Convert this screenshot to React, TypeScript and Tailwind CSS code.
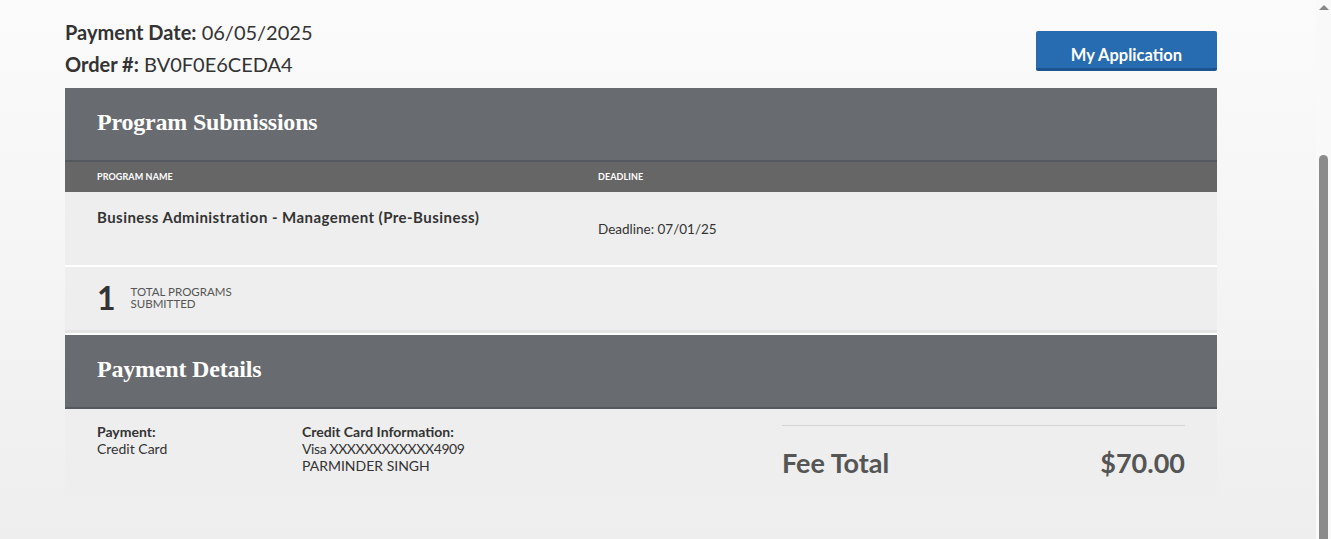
const sans = { fontFamily: 'Lato, "Open Sans", sans-serif' };

function SectionHeader({ title }: { title: string }) {
  return (
    <div className="h-[74px] bg-[#686b6f] border-b-2 border-[#55585c] flex items-center px-8">
      <h2 className="text-white text-[24px] font-bold tracking-[-0.2px] font-['Liberation_Serif',serif] -mt-1">
        {title}
      </h2>
    </div>
  );
}

export default function App() {
  return (
    <div
      className="h-[539px] w-[1331px] overflow-hidden flex bg-gradient-to-b from-[#fbfbfb] to-[#eeeeee] text-[#333]"
      style={sans}
    >
      <main className="flex-1 pl-[65px] pr-[99px] pt-[16px]">
        {/* Order summary */}
        <div className="flex justify-between items-start h-[72px]">
          <div className="text-[20px] leading-[32px] text-[#333]">
            <div>
              <span className="font-bold">Payment Date:</span> 06/05/2025
            </div>
            <div>
              <span className="font-bold">Order #:</span> BV0F0E6CEDA4
            </div>
          </div>
          <button className="mt-[15px] w-[181px] h-[40px] bg-[#276bb0] border-b-[3px] border-[#1c5490] rounded-[2px] text-white font-bold text-[16.5px] pt-[11px]">
            My Application
          </button>
        </div>

        {/* Program Submissions */}
        <SectionHeader title="Program Submissions" />
        <div className="h-[30px] bg-[#666666] flex items-center px-8 text-white text-[9px] font-bold uppercase tracking-[0.1px]">
          <div className="w-[501px]">Program Name</div>
          <div>Deadline</div>
        </div>
        <div className="h-[73px] bg-[#eeeeee] flex px-8 pt-[14px]">
          <div className="w-[501px] text-[15px] tracking-[0.45px] font-bold text-[#333]">
            Business Administration - Management (Pre-Business)
          </div>
          <div className="pt-[13px] text-[13.5px] text-[#333]">Deadline: 07/01/25</div>
        </div>
        <div className="h-[2px] bg-white" />
        <div className="h-[66px] bg-[#eeeeee] border-b-[3px] border-[#e4e4e4] flex items-center px-8 gap-[15px]">
          <div className="text-[32px] font-bold leading-none text-[#333] -mt-[2px]">1</div>
          <div className="text-[11.5px] leading-[12px] uppercase text-[#555] -mt-[2px]">
            Total Programs
            <br />
            Submitted
          </div>
        </div>
        <div className="h-[2px] bg-white" />

        {/* Payment Details */}
        <SectionHeader title="Payment Details" />
        <div className="h-[86px] bg-[#eeeeee] flex px-8 pt-[16px] text-[14px] leading-[17px] text-[#333]">
          <div className="w-[205px] -mt-[2px]">
            <div className="font-bold">Payment:</div>
            <div>Credit Card</div>
          </div>
          <div className="w-[480px] -mt-[2px]">
            <div className="font-bold">Credit Card Information:</div>
            <div className="tracking-[-0.4px]">Visa XXXXXXXXXXXX4909</div>
            <div>PARMINDER SINGH</div>
          </div>
          <div className="w-[403px] border-t border-[#d4d4d4] self-start pt-[22px] flex justify-between text-[27px] font-bold text-[#555] leading-[30px]">
            <span>Fee Total</span>
            <span>$70.00</span>
          </div>
        </div>
      </main>

      {/* scrollbar */}
      <div className="w-[15px] bg-[#f9f9f9] flex flex-col items-center">
        <div className="mt-[5px] w-0 h-0 border-l-[5px] border-r-[5px] border-b-[5px] border-l-transparent border-r-transparent border-b-[#888]" />
        <div className="mt-[145px] w-[9px] flex-1 bg-[#8b8b8b] rounded-t-[5px]" />
      </div>
    </div>
  );
}
